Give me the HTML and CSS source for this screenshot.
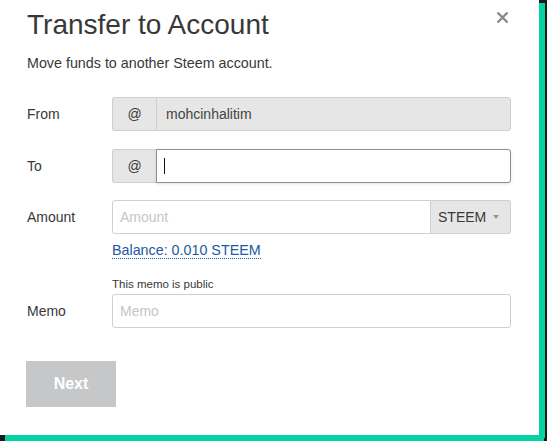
FILE: index.html
```html
<!DOCTYPE html>
<html lang="en">
<head>
<meta charset="utf-8">
<title>Transfer to Account</title>
<link rel="stylesheet" href="styles.css">
</head>
<body>
<div class="modal">
  <div class="header">
    <h1 class="title">Transfer to Account</h1>
    <button class="close" type="button" aria-label="Close">
      <svg width="13" height="13" viewBox="0 0 13 13"><path d="M1.5 1.5 L11.5 11.5 M11.5 1.5 L1.5 11.5" stroke="#8a8a8a" stroke-width="2.4" stroke-linecap="butt" fill="none"/></svg>
    </button>
  </div>
  <p class="subtitle">Move funds to another Steem account.</p>
  <form class="form">
    <div class="row">
      <label class="label">From</label>
      <div class="group">
        <span class="addon">@</span>
        <input class="field field-disabled" type="text" value="mohcinhalitim" disabled>
      </div>
    </div>
    <div class="row row-to">
      <label class="label">To</label>
      <div class="group">
        <span class="addon">@</span>
        <div class="field-wrap">
          <input class="field field-focus" type="text" value="">
          <span class="caret"></span>
        </div>
      </div>
    </div>
    <div class="row row-amount">
      <label class="label">Amount</label>
      <div class="col">
        <div class="group">
          <input class="field field-amount" type="text" placeholder="Amount">
          <span class="select">STEEM<span class="tri"></span></span>
        </div>
        <div class="balance"><a class="balance-link">Balance: 0.010 STEEM</a></div>
      </div>
    </div>
    <div class="row row-memo">
      <label class="label">Memo</label>
      <div class="col">
        <div class="note">This memo is public</div>
        <input class="field field-memo" type="text" placeholder="Memo">
      </div>
    </div>
    <button class="next" type="button">Next</button>
  </form>
</div>
</body>
</html>
```

FILE: styles.css
```css
html, body {
  margin: 0;
  padding: 0;
}
body {
  background: #1b1b1b;
  width: 547px;
  height: 441px;
  overflow: hidden;
  font-family: "Liberation Sans", Arial, sans-serif;
  color: #333;
}
.modal {
  width: 539px;
  height: 435px;
  box-sizing: border-box;
  background: #fff;
  padding: 0 0 0 27px;
  box-shadow: 6px 3px 0 #06d3a4, 5px 6px 0 #06d3a4;
}
.header {
  display: flex;
  justify-content: space-between;
  align-items: flex-start;
  padding-right: 30px;
}
.title {
  margin: 9px 0 0 0;
  font-size: 28px;
  line-height: 32px;
  font-weight: normal;
  color: #383838;
}
.close {
  margin-top: 11px;
  padding: 0;
  border: 0;
  background: none;
  width: 13px;
  height: 13px;
  display: block;
}
.close svg { display: block; }
.subtitle {
  margin: 12px 0 0 0;
  font-size: 14.3px;
  line-height: 20px;
  color: #383838;
}
.form {
  margin-top: 24px;
}
.row {
  display: grid;
  grid-template-columns: 85px 399px;
  align-items: start;
}
.row-to { margin-top: 18px; }
.row-amount { margin-top: 17px; }
.row-memo { margin-top: 17px; align-items: end; }
.label {
  font-size: 14px;
  height: 34px;
  line-height: 34px;
  color: #383838;
}
.col {
  display: flex;
  flex-direction: column;
}
.group {
  display: flex;
  height: 34px;
}
.addon {
  width: 44px;
  box-sizing: border-box;
  border: 1px solid #cfcfcf;
  border-right: 0;
  border-radius: 3px 0 0 3px;
  background: #e6e6e6;
  font-size: 14px;
  line-height: 32px;
  text-align: center;
  color: #383838;
}
.field {
  box-sizing: border-box;
  height: 34px;
  margin: 0;
  border: 1px solid #cfcfcf;
  border-radius: 0 3px 3px 0;
  padding: 0 9px;
  font-family: "Liberation Sans", Arial, sans-serif;
  font-size: 14px;
  color: #383838;
  background: #fff;
  outline: none;
}
.field::placeholder { color: #c6c6c6; }
.field-disabled {
  flex: 1;
  background: #e6e6e6;
  color: #444;
  -webkit-text-fill-color: #444;
  opacity: 1;
}
.field-wrap {
  position: relative;
  flex: 1;
  display: flex;
}
.field-focus {
  flex: 1;
  border-color: #8e8e8e;
  box-shadow: 0 1px 3px rgba(0,0,0,0.12);
}
.caret {
  position: absolute;
  left: 8px;
  top: 9px;
  width: 1px;
  height: 16px;
  background: #111;
}
.field-amount {
  flex: 1;
  border-radius: 3px 0 0 3px;
  padding-left: 7px;
}
.select {
  width: 80px;
  box-sizing: border-box;
  border: 1px solid #cfcfcf;
  border-left: 0;
  border-radius: 0 3px 3px 0;
  background: #e6e6e6;
  font-size: 14px;
  line-height: 32px;
  padding-left: 7px;
  color: #383838;
  display: flex;
  align-items: center;
}
.tri {
  margin-left: 7px;
  width: 0;
  height: 0;
  border-left: 3.5px solid transparent;
  border-right: 3.5px solid transparent;
  border-top: 4px solid #999;
}
.balance {
  margin-top: 6px;
  font-size: 14.3px;
  line-height: 20px;
}
.balance-link {
  color: #2357a0;
  border-bottom: 1px dotted #2357a0;
}
.note {
  font-size: 11.5px;
  line-height: 14px;
  margin-bottom: 3px;
  color: #383838;
}
.field-memo {
  width: 399px;
  border-radius: 3px;
  padding-left: 7px;
}
.next {
  display: block;
  margin: 33px 0 0 -1px;
  width: 90px;
  height: 46px;
  border: 0;
  background: #c6c7c9;
  color: #fff;
  font-family: "Liberation Sans", Arial, sans-serif;
  font-weight: bold;
  font-size: 16px;
  padding: 0;
}
```
